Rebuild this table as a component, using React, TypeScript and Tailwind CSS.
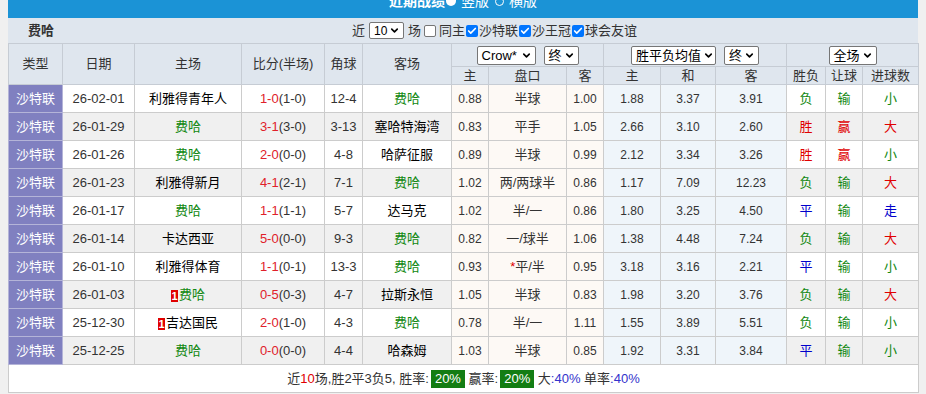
import { ChevronDown, Check } from "lucide-react";

type Match = {
  date: string;
  home: string;
  homeRed?: boolean;
  score: string;
  half: string;
  corner: string;
  away: string;
  o1: string;
  line: string;
  lineStar?: boolean;
  o2: string;
  w: string;
  d: string;
  l: string;
  res: string;
  hcp: string;
  ou: string;
};

const matches: Match[] = [
  { date: "26-02-01", home: "利雅得青年人", score: "1-0", half: "(1-0)", corner: "12-4", away: "费哈", o1: "0.88", line: "半球", o2: "1.00", w: "1.88", d: "3.37", l: "3.91", res: "负", hcp: "输", ou: "小" },
  { date: "26-01-29", home: "费哈", score: "3-1", half: "(3-0)", corner: "3-13", away: "塞哈特海湾", o1: "0.83", line: "平手", o2: "1.05", w: "2.66", d: "3.10", l: "2.60", res: "胜", hcp: "赢", ou: "大" },
  { date: "26-01-26", home: "费哈", score: "2-0", half: "(0-0)", corner: "4-8", away: "哈萨征服", o1: "0.89", line: "半球", o2: "0.99", w: "2.12", d: "3.34", l: "3.26", res: "胜", hcp: "赢", ou: "小" },
  { date: "26-01-23", home: "利雅得新月", score: "4-1", half: "(2-1)", corner: "7-1", away: "费哈", o1: "1.02", line: "两/两球半", o2: "0.86", w: "1.17", d: "7.09", l: "12.23", res: "负", hcp: "输", ou: "大" },
  { date: "26-01-17", home: "费哈", score: "1-1", half: "(1-1)", corner: "5-7", away: "达马克", o1: "1.02", line: "半/一", o2: "0.86", w: "1.80", d: "3.25", l: "4.50", res: "平", hcp: "输", ou: "走" },
  { date: "26-01-14", home: "卡达西亚", score: "5-0", half: "(0-0)", corner: "9-3", away: "费哈", o1: "0.82", line: "一/球半", o2: "1.06", w: "1.38", d: "4.48", l: "7.24", res: "负", hcp: "输", ou: "大" },
  { date: "26-01-10", home: "利雅得体育", score: "1-1", half: "(0-1)", corner: "13-3", away: "费哈", o1: "0.93", line: "平/半", lineStar: true, o2: "0.95", w: "3.18", d: "3.16", l: "2.21", res: "平", hcp: "输", ou: "小" },
  { date: "26-01-03", home: "费哈", homeRed: true, score: "0-5", half: "(0-3)", corner: "4-7", away: "拉斯永恒", o1: "1.05", line: "半球", o2: "0.83", w: "1.98", d: "3.20", l: "3.76", res: "负", hcp: "输", ou: "大" },
  { date: "25-12-30", home: "吉达国民", homeRed: true, score: "2-0", half: "(1-0)", corner: "4-3", away: "费哈", o1: "0.78", line: "半/一", o2: "1.11", w: "1.55", d: "3.89", l: "5.51", res: "负", hcp: "输", ou: "小" },
  { date: "25-12-25", home: "费哈", score: "0-0", half: "(0-0)", corner: "4-4", away: "哈森姆", o1: "1.03", line: "半球", o2: "0.85", w: "1.92", d: "3.31", l: "3.84", res: "平", hcp: "输", ou: "小" },
];

const resultColor = (v: string) => {
  if (v === "胜" || v === "赢" || v === "大") return "text-[#e00000]";
  if (v === "平" || v === "走") return "text-[#0000cc]";
  return "text-[#118811]";
};

const teamColor = (t: string) => (t === "费哈" ? "text-[#118811]" : "text-black");

const FakeSelect = ({ label, w }: { label: string; w: string }) => (
  <span
    className={`inline-flex h-[19px] shrink-0 items-center justify-between gap-[2px] whitespace-nowrap rounded-[2px] border border-[#767676] bg-white pl-[4px] pr-[3px] text-[13px] leading-none text-black ${w}`}
  >
    <span>{label}</span>
    <ChevronDown className="h-[11px] w-[11px] shrink-0" strokeWidth={3.5} />
  </span>
);

const Box = ({ checked }: { checked?: boolean }) =>
  checked ? (
    <span className="mx-[1px] inline-flex h-[12px] w-[12px] items-center justify-center rounded-[2px] bg-[#0075ff]">
      <Check className="h-[10px] w-[10px] text-white" strokeWidth={4} />
    </span>
  ) : (
    <span className="mx-[3px] inline-block h-[12px] w-[12px] rounded-[2px] border border-[#767676] bg-white" />
  );

const th = "border border-[#c6ccd4] p-0 text-center font-normal text-[#333]";
const td = "border border-[#cccccc] p-0 text-center";

export default function App() {
  return (
    <div className="min-h-screen bg-[#f0f0f0] font-['Liberation_Sans','Noto_Sans_CJK_SC',sans-serif] text-[12px]">
      <div className="ml-[8px] w-[910px]">
        {/* title bar, scrolled so the text is half cut */}
        <div className="h-[18px] overflow-hidden bg-[#1b93d6]">
          <div className="-mt-[8px] flex h-[18px] items-center justify-center text-[14px] text-white">
            <span className="font-bold">近期战绩</span>
            <span className="ml-[1px] inline-block h-[10px] w-[10px] rounded-full bg-white" />
            <span className="ml-[5px]">竖版</span>
            <span className="ml-[6px] inline-block h-[9px] w-[9px] rounded-full border-[1.5px] border-white" />
            <span className="ml-[5px]">横版</span>
          </div>
        </div>

        {/* filter bar */}
        <div className="flex h-[25px] items-center bg-[#dfe6ee] pl-[20px]">
          <span className="text-[13px] font-bold text-[#333]">费哈</span>
          <div className="ml-[298px] flex items-center text-[13px] text-[#333]">
            <span>近</span>
            <span className="ml-[4px]">
              <span className="inline-flex h-[17px] w-[35px] items-center justify-between rounded-[2px] border border-[#767676] bg-white pl-[4px] pr-[3px] text-[12px] leading-none text-black">
                <span>10</span>
                <ChevronDown className="h-[11px] w-[11px]" strokeWidth={3.5} />
              </span>
            </span>
            <span className="ml-[4px]">场</span>
            <Box />
            <span>同主</span>
            <Box checked />
            <span>沙特联</span>
            <Box checked />
            <span>沙王冠</span>
            <Box checked />
            <span>球会友谊</span>
          </div>
        </div>

        <table className="w-[910px] table-fixed border-collapse">
          <colgroup>
            <col className="w-[54px]" />
            <col className="w-[72px]" />
            <col className="w-[107px]" />
            <col className="w-[83px]" />
            <col className="w-[38px]" />
            <col className="w-[89px]" />
            <col className="w-[37px]" />
            <col className="w-[78px]" />
            <col className="w-[37px]" />
            <col className="w-[57px]" />
            <col className="w-[55px]" />
            <col className="w-[71px]" />
            <col className="w-[39px]" />
            <col className="w-[37px]" />
            <col className="w-[56px]" />
          </colgroup>
          <thead className="bg-[#dfe6ee] text-[13px]">
            <tr className="h-[23px]">
              <th rowSpan={2} className={th}>类型</th>
              <th rowSpan={2} className={th}>日期</th>
              <th rowSpan={2} className={th}>主场</th>
              <th rowSpan={2} className={th}>比分(半场)</th>
              <th rowSpan={2} className={th}>角球</th>
              <th rowSpan={2} className={th}>客场</th>
              <th colSpan={3} className={th}>
                <div className="flex items-center justify-center gap-[8px]">
                  <FakeSelect label="Crow*" w="w-[59px]" />
                  <FakeSelect label="终" w="w-[35px]" />
                </div>
              </th>
              <th colSpan={3} className={th}>
                <div className="flex items-center justify-center gap-[8px]">
                  <FakeSelect label="胜平负均值" w="w-[85px]" />
                  <FakeSelect label="终" w="w-[35px]" />
                </div>
              </th>
              <th colSpan={3} className={th}>
                <div className="flex items-center justify-center">
                  <FakeSelect label="全场" w="w-[48px]" />
                </div>
              </th>
            </tr>
            <tr className="h-[18px] leading-[16px]">
              <th className={th}>主</th>
              <th className={th}>盘口</th>
              <th className={th}>客</th>
              <th className={th}>主</th>
              <th className={th}>和</th>
              <th className={th}>客</th>
              <th className={th}>胜负</th>
              <th className={th}>让球</th>
              <th className={th}>进球数</th>
            </tr>
          </thead>
          <tbody className="text-[#333]">
            {matches.map((m, i) => {
              const bg = i % 2 === 1 ? "bg-[#f0f0f0]" : "bg-white";
              return (
                <tr key={m.date} className="h-[28px]">
                  <td className="border border-[#b4b4d8] bg-[#8080c0] p-0 text-center text-[13px] text-white">沙特联</td>
                  <td className={`${td} ${bg} text-[13px]`}>{m.date}</td>
                  <td className={`${td} ${bg} text-[13px] ${teamColor(m.home)}`}>
                    {m.homeRed && (
                      <span className="mr-px inline-block h-[12px] w-[7px] bg-[#e00000] align-[-1px] text-[11px] leading-[12px] font-bold text-white">1</span>
                    )}
                    {m.home}
                  </td>
                  <td className={`${td} ${bg} text-[13px]`}>
                    <span className="text-[#e0202a]">{m.score}</span>
                    {m.half}
                  </td>
                  <td className={`${td} ${bg} text-[13px]`}>{m.corner}</td>
                  <td className={`${td} ${bg} text-[13px] ${teamColor(m.away)}`}>{m.away}</td>
                  <td className={`${td} bg-[#fdf9f5]`}>{m.o1}</td>
                  <td className={`${td} bg-[#fdf9f5] text-[13px]`}>
                    {m.lineStar && <span className="text-[#e00000]">*</span>}
                    {m.line}
                  </td>
                  <td className={`${td} bg-[#fdf9f5]`}>{m.o2}</td>
                  <td className={`${td} bg-[#eff5fa]`}>{m.w}</td>
                  <td className={`${td} bg-[#eff5fa]`}>{m.d}</td>
                  <td className={`${td} bg-[#eff5fa]`}>{m.l}</td>
                  <td className={`${td} ${bg} text-[13px] ${resultColor(m.res)}`}>{m.res}</td>
                  <td className={`${td} ${bg} text-[13px] ${resultColor(m.hcp)}`}>{m.hcp}</td>
                  <td className={`${td} ${bg} text-[13px] ${resultColor(m.ou)}`}>{m.ou}</td>
                </tr>
              );
            })}
            <tr className="h-[28px]">
              <td colSpan={15} className="border border-[#cccccc] bg-white p-0 text-center text-[13px] text-[#333]">
                <span>近</span>
                <span className="text-[#e00000]">10</span>
                <span>场,胜2平3负5, 胜率:</span>
                <span className="ml-[2px] inline-block bg-[#137d13] px-[4px] leading-[18px] text-white">20%</span>
                <span> 赢率:</span>
                <span className="ml-[2px] inline-block bg-[#137d13] px-[4px] leading-[18px] text-white">20%</span>
                <span> 大</span>
                <span className="text-[#3333cc]">:40%</span>
                <span> 单率</span>
                <span className="text-[#3333cc]">:40%</span>
              </td>
            </tr>
          </tbody>
        </table>
      </div>
    </div>
  );
}
